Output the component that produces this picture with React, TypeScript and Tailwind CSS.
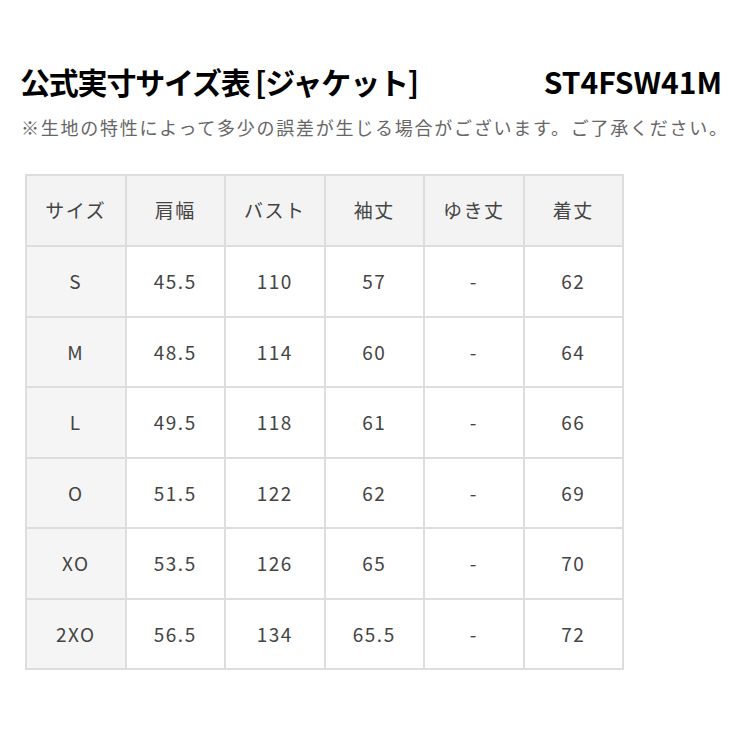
const headers = ["サイズ", "肩幅", "バスト", "袖丈", "ゆき丈", "着丈"];

const rows = [
  ["S", "45.5", "110", "57", "-", "62"],
  ["M", "48.5", "114", "60", "-", "64"],
  ["L", "49.5", "118", "61", "-", "66"],
  ["O", "51.5", "122", "62", "-", "69"],
  ["XO", "53.5", "126", "65", "-", "70"],
  ["2XO", "56.5", "134", "65.5", "-", "72"],
];

const App = () => {
  return (
    <div
      className="w-[730px] h-[730px] bg-white overflow-hidden"
      style={{ fontFamily: '"Noto Sans CJK JP", "Noto Sans", sans-serif' }}
    >
      <div className="flex items-end justify-between pl-[20px] pr-[8px] pt-[61px]">
        <h1 className="text-[30px] font-bold text-black leading-[40px] tracking-[-1.2px]">
          公式実寸サイズ表 [ジャケット]
        </h1>
        <p className="text-[30px] font-bold text-black leading-[40px]">ST4FSW41M</p>
      </div>
      <p className="pl-[21px] mt-[14px] text-[18px] text-[#666] leading-[24px] tracking-[1.75px] whitespace-nowrap">
        ※生地の特性によって多少の誤差が生じる場合がございます。ご了承ください。
      </p>
      <div className="pl-[25px] mt-[35px]">
        <table className="table-fixed w-[599px] border-collapse border-2 border-[#dddddd] text-[#444] text-[19px] tracking-[1.5px]">
          <thead>
            <tr className="bg-[#f3f3f3]">
              {headers.map((h) => (
                <th
                  key={h}
                  className="h-[71px] border-2 border-[#dddddd] font-normal text-center"
                >
                  {h}
                </th>
              ))}
            </tr>
          </thead>
          <tbody>
            {rows.map((r, i) => (
              <tr key={i}>
                {r.map((c, j) => (
                  <td
                    key={j}
                    className={
                      j === 0
                        ? "h-[70.5px] border-2 border-[#dddddd] text-center bg-[#f5f5f5]"
                        : "h-[70.5px] border-2 border-[#dddddd] text-center"
                    }
                  >
                    {c}
                  </td>
                ))}
              </tr>
            ))}
          </tbody>
        </table>
      </div>
    </div>
  );
};

export default App;
